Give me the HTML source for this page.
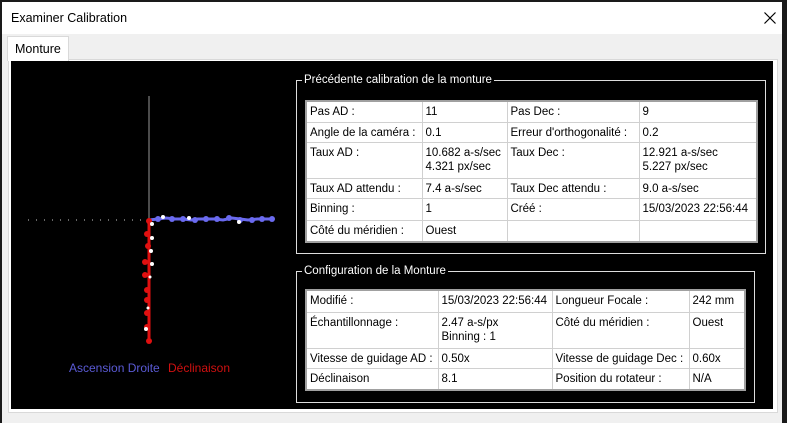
<!DOCTYPE html>
<html><head><style>
body{margin:0;width:787px;height:423px;background:#1a1a1a;font-family:"Liberation Sans",sans-serif;font-size:12px;position:relative;overflow:hidden}
.win{position:absolute;left:2px;top:2px;width:780px;height:421px;background:#f0f0f0}
.title{position:absolute;left:0;top:0;width:780px;height:32px;background:#fff}
.title span{position:absolute;left:9px;top:9px;font-size:12.5px;color:#000}
.tab{position:absolute;left:7px;top:36px;width:60px;height:24px;background:#fff;border:1px solid #d9d9d9;border-bottom:none}
.tab span{position:absolute;left:7px;top:5px;font-size:12.5px}
.pane{position:absolute;left:8px;top:59px;width:768px;height:352px;background:#fff;border:1px solid #d9d9d9}
.blk{position:absolute;left:11px;top:61px;width:762px;height:348px;background:#000}
.grp{position:absolute;border:1px solid #ddd}
.grp .lg{position:absolute;top:-8px;left:5px;background:#000;color:#fff;padding:0 2px;font-size:11.5px;line-height:14px;white-space:nowrap}
table{position:absolute;border-collapse:collapse;background:#fff;border:2px solid #a0a0a0;table-layout:fixed}
td{border:1px solid #d0d0d0;padding:3px 3px 1px;vertical-align:top;font-size:11.5px;line-height:14px;color:#000;white-space:nowrap;overflow:hidden}
</style></head><body>
<div class="win">
<div class="title"><span>Examiner Calibration</span>
<svg style="position:absolute;left:762px;top:10px" width="12" height="12"><path d="M0.5 0.5L11.5 11.5M11.5 0.5L0.5 11.5" stroke="#000" stroke-width="1.2"/></svg></div>
</div>
<div class="pane"></div>
<div class="tab"><span>Monture</span></div>
<div class="blk"></div>
<svg style="position:absolute;left:0;top:0" width="787" height="423">
<line x1="149" y1="96" x2="149" y2="220" stroke="#999" stroke-width="1"/>
<g stroke="#ccc">
<line x1="28" y1="220" x2="29" y2="220"/><line x1="36" y1="220" x2="37" y2="220"/><line x1="44" y1="220" x2="45" y2="220"/><line x1="52" y1="220" x2="53" y2="220"/><line x1="60" y1="220" x2="61" y2="220"/><line x1="68" y1="220" x2="69" y2="220"/><line x1="76" y1="220" x2="77" y2="220"/><line x1="84" y1="220" x2="85" y2="220"/><line x1="92" y1="220" x2="93" y2="220"/><line x1="100" y1="220" x2="101" y2="220"/><line x1="108" y1="220" x2="109" y2="220"/><line x1="116" y1="220" x2="117" y2="220"/><line x1="124" y1="220" x2="125" y2="220"/><line x1="132" y1="220" x2="133" y2="220"/><line x1="140" y1="220" x2="141" y2="220"/>
</g>
<polyline points="149,220 158,219 166,218 175,219 183,219 191,220 198,219 206,219 215,219 223,220 232,218 240,219 248,220 257,219 265,219 272,219" fill="none" stroke="#6a6aef" stroke-width="3"/>
<g fill="#6a6aef"><circle cx="158" cy="219" r="3"/><circle cx="172" cy="219" r="3"/><circle cx="183" cy="219" r="3"/><circle cx="195" cy="220" r="3"/><circle cx="206" cy="219" r="3"/><circle cx="217" cy="219" r="3"/><circle cx="229" cy="218" r="3"/><circle cx="240" cy="220" r="3"/><circle cx="252" cy="220" r="3"/><circle cx="262" cy="219" r="3"/><circle cx="272" cy="219" r="3"/></g>
<g fill="#fff"><circle cx="163" cy="217" r="2"/><circle cx="189" cy="218" r="2"/><circle cx="239" cy="222" r="2"/></g>
<polyline points="149,220 149,341" stroke="#e01010" stroke-width="3"/>
<g fill="#e01010"><circle cx="149" cy="221" r="3"/><circle cx="147" cy="234" r="3"/><circle cx="148" cy="246" r="3"/><circle cx="145" cy="262" r="3"/><circle cx="145" cy="275" r="3"/><circle cx="147" cy="290" r="3"/><circle cx="147" cy="300" r="3"/><circle cx="147" cy="313" r="3"/><circle cx="147" cy="327" r="3"/><circle cx="149" cy="341" r="3"/></g>
<g fill="#fff"><circle cx="152" cy="224" r="2"/><circle cx="152" cy="238" r="2"/><circle cx="151" cy="251" r="2"/><circle cx="152" cy="264" r="2"/><circle cx="150" cy="277" r="1.5"/><circle cx="148" cy="308" r="1.5"/><circle cx="146" cy="329" r="2"/></g>
<text x="69" y="372" fill="#5b5bd6" font-family="Liberation Sans" font-size="12">Ascension Droite</text>
<text x="168" y="372" fill="#d01010" font-family="Liberation Sans" font-size="12">Déclinaison</text>
</svg>
<div class="grp" style="left:296px;top:80px;width:468px;height:172px"><span class="lg">Précédente calibration de la monture</span></div>
<table style="left:305px;top:100px;width:451px">
<col width="116"><col width="85"><col width="132"><col width="118">
<tr style="height:21px"><td>Pas AD :</td><td>11</td><td>Pas Dec :</td><td>9</td></tr>
<tr style="height:20px"><td>Angle de la caméra :</td><td>0.1</td><td>Erreur d'orthogonalité :</td><td>0.2</td></tr>
<tr style="height:36px"><td>Taux AD :</td><td>10.682 a-s/sec<br>4.321 px/sec</td><td>Taux Dec :</td><td>12.921 a-s/sec<br>5.227 px/sec</td></tr>
<tr style="height:20px"><td>Taux AD attendu :</td><td>7.4 a-s/sec</td><td>Taux Dec attendu :</td><td>9.0 a-s/sec</td></tr>
<tr style="height:22px"><td>Binning :</td><td>1</td><td>Créé :</td><td>15/03/2023 22:56:44</td></tr>
<tr style="height:22px"><td>Côté du méridien :</td><td>Ouest</td><td></td><td></td></tr>
</table>
<div class="grp" style="left:296px;top:271px;width:457px;height:130px"><span class="lg">Configuration de la Monture</span></div>
<table style="left:305px;top:289px;width:439px">
<col width="132"><col width="114"><col width="137"><col width="56">
<tr style="height:22px"><td>Modifié :</td><td>15/03/2023 22:56:44</td><td>Longueur Focale :</td><td>242 mm</td></tr>
<tr style="height:36px"><td>Échantillonnage :</td><td>2.47 a-s/px<br>Binning : 1</td><td>Côté du méridien :</td><td>Ouest</td></tr>
<tr style="height:20px"><td>Vitesse de guidage AD :</td><td>0.50x</td><td>Vitesse de guidage Dec :</td><td>0.60x</td></tr>
<tr style="height:22px"><td>Déclinaison</td><td>8.1</td><td>Position du rotateur :</td><td>N/A</td></tr>
</table>
</body></html>
